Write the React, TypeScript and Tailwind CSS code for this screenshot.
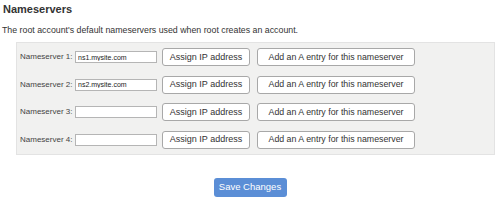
const rows = [
  { n: 1, value: "ns1.mysite.com" },
  { n: 2, value: "ns2.mysite.com" },
  { n: 3, value: "" },
  { n: 4, value: "" },
];

export default function App() {
  return (
    <div className="h-[202px] w-[500px] overflow-hidden bg-white font-['Liberation_Sans',Arial,sans-serif] text-[#333]">
      <h2 className="pl-[3px] pt-[3px] text-[11px] font-bold leading-[13px]">Nameservers</h2>
      <p className="mt-[8px] pl-[2px] text-[8.8px] leading-[12px]">
        The root account's default nameservers used when root creates an account.
      </p>

      <div className="ml-[16px] mt-[6px] flex w-[479px] flex-col gap-[9.5px] border border-[#e3e3e3] bg-[#f1f1f0] py-[5px] pl-[3px]">
        {rows.map((row) => (
          <div key={row.n} className="flex h-[18px] items-center">
            <label className="w-[55px] whitespace-nowrap text-[8px] leading-none text-[#444]">
              Nameserver {row.n}:
            </label>
            <input
              readOnly
              value={row.value}
              className="h-[12px] w-[82px] border border-[#b5b5b5] bg-white px-[2px] text-[7px] leading-none text-[#222] outline-none"
            />
            <button className="ml-[5px] h-[18px] w-[88px] whitespace-nowrap rounded-[3px] border border-[#a8a8a8] bg-white text-[9px] leading-none text-[#333]">
              Assign IP address
            </button>
            <button className="ml-[7px] h-[18px] w-[158px] whitespace-nowrap rounded-[3px] border border-[#a8a8a8] bg-white text-[8.8px] leading-none text-[#333]">
              Add an A entry for this nameserver
            </button>
          </div>
        ))}
      </div>

      <div className="mt-[23px] flex justify-center">
        <button className="h-[19px] w-[73px] rounded-[3px] bg-[#5b8ed6] text-[9.5px] leading-none text-white">
          Save Changes
        </button>
      </div>
    </div>
  );
}
